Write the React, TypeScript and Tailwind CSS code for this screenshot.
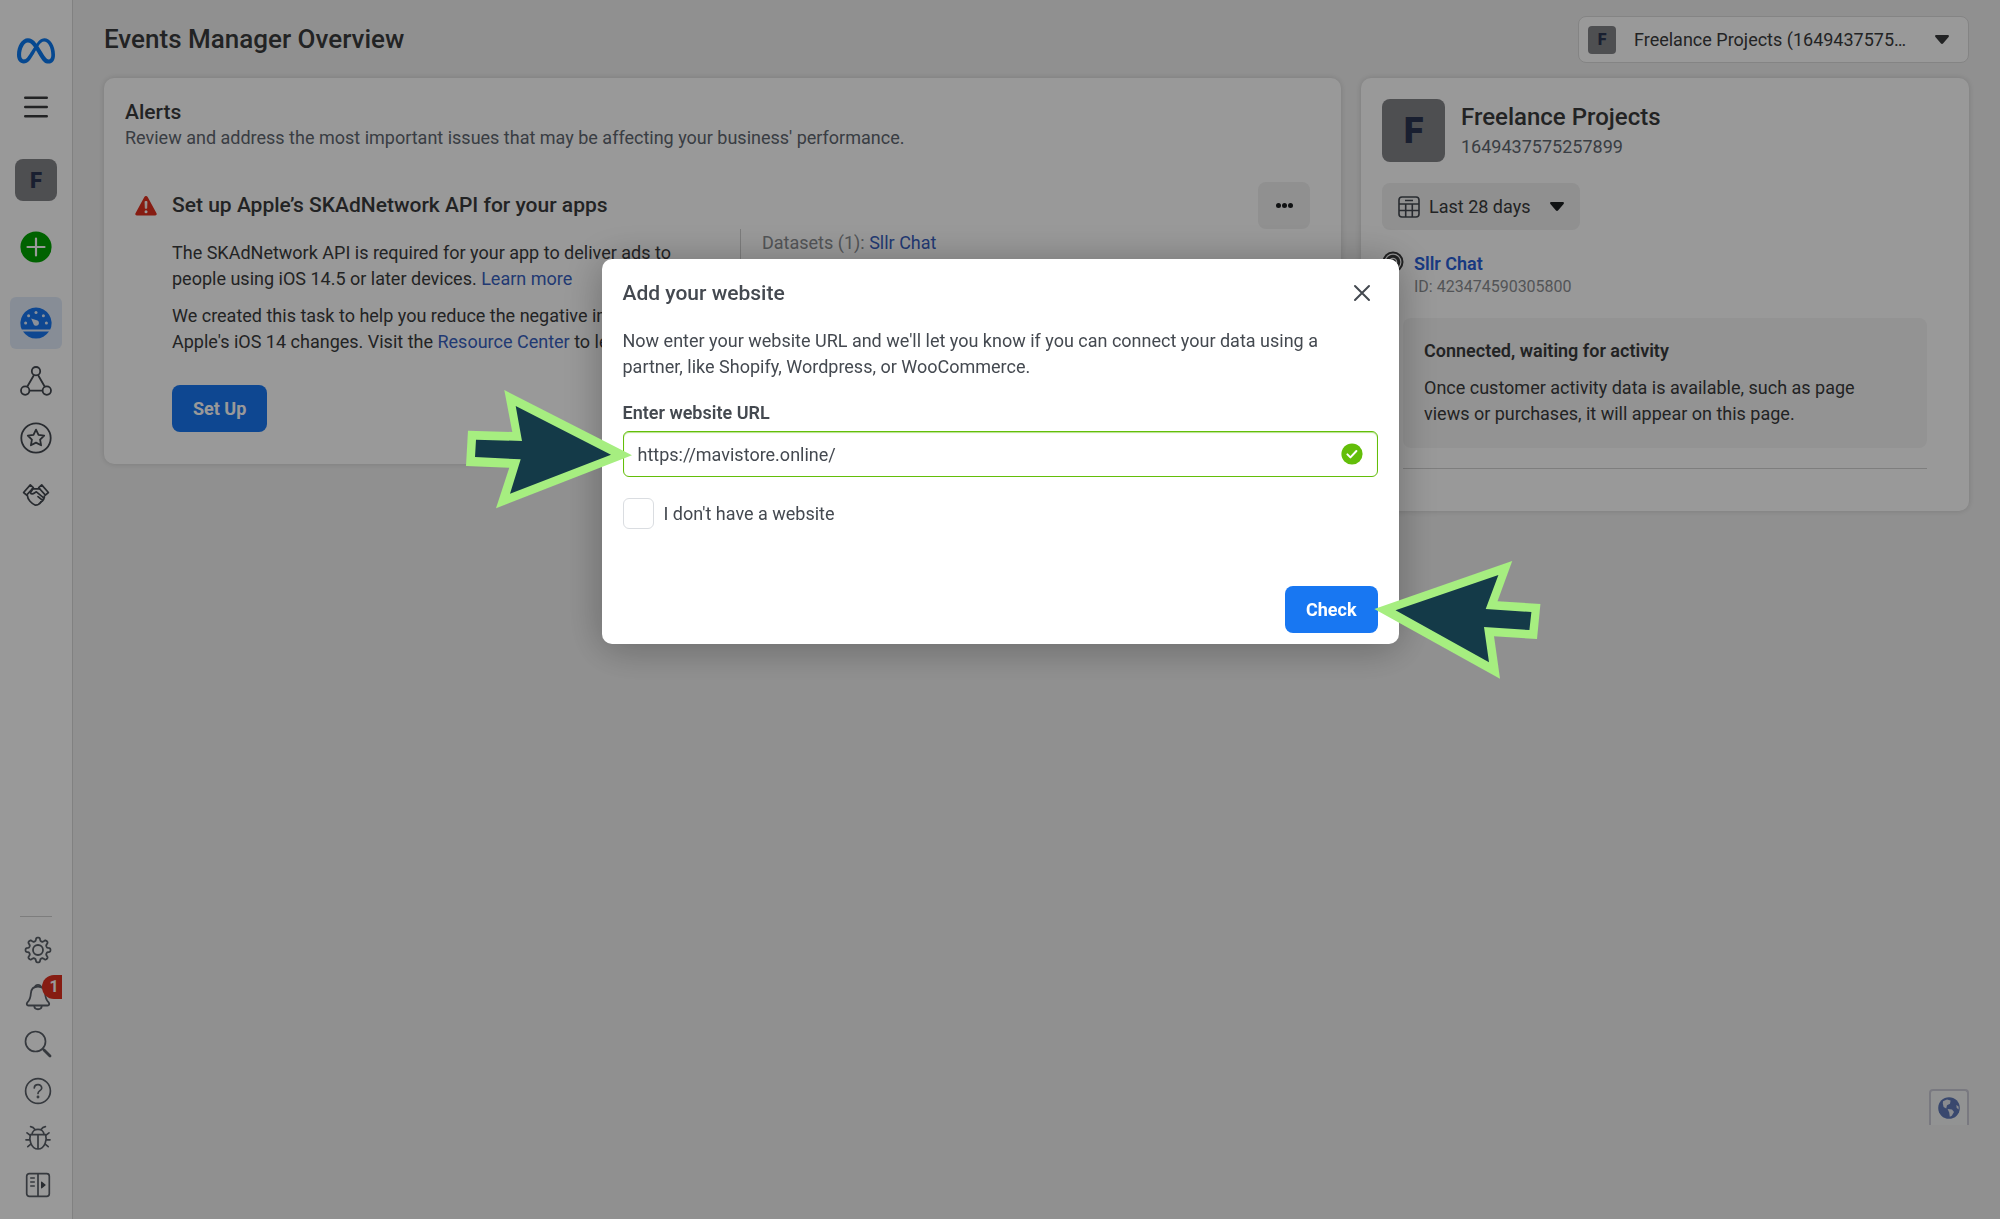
import type { ReactNode } from "react";
import { FaMeta } from "react-icons/fa6";

type IconProps = { className?: string };

// Eight rounded teeth around a 28x28 centre
const gearPoints = Array.from({ length: 120 }, (_, i) => {
  const angle = (i / 120) * Math.PI * 2;
  const radius = 10.8 + 1.7 * Math.tanh(2 * Math.cos(angle * 8));
  return `${(14 + radius * Math.sin(angle)).toFixed(2)},${(14 - radius * Math.cos(angle)).toFixed(2)}`;
}).join(" ");

const CaretDown = ({ className }: IconProps) => (
  <svg viewBox="0 0 14 9" fill="currentColor" className={className} aria-hidden="true">
    <path d="M1.2 0h11.6c1 0 1.5 1.1.8 1.9L8 8.5a1.4 1.4 0 0 1-2 0L.4 1.9C-.3 1.1.2 0 1.2 0z" />
  </svg>
);

const MenuIcon = () => (
  <svg viewBox="0 0 24 22" className="h-[22px] w-6" stroke="#3a3b3c" strokeWidth="2.4" strokeLinecap="round">
    <path d="M1.2 1.8h21.6M1.2 11h21.6M1.2 20.2h21.6" />
  </svg>
);

const PlusIcon = () => (
  <svg viewBox="0 0 32 32" className="size-8">
    <circle cx="16" cy="16" r="15.6" fill="#00a400" />
    <path d="M16 7.5v17M7.5 16h17" stroke="#fff" strokeWidth="2.2" strokeLinecap="round" />
  </svg>
);

const GaugeIcon = () => (
  <svg viewBox="0 0 32 32" className="size-8">
    <path d="M1.8 22.6A15.6 15.6 0 1 1 30.2 22.6z" fill="#1877f2" />
    <path d="M3 24.6h26A15.6 15.6 0 0 1 3 24.6z" fill="#1877f2" />
    <g fill="#e7f1ff">
      <circle cx="5.6" cy="16" r="1.5" />
      <circle cx="8.6" cy="8.8" r="1.5" />
      <circle cx="16" cy="5.6" r="1.5" />
      <circle cx="23.4" cy="8.8" r="1.5" />
      <circle cx="26.4" cy="16" r="1.5" />
      <path d="M11.2 11.6l6.3 2a2.8 2.800 0 1 1-3.800 3.800z" />
    </g>
  </svg>
);

const TriangleNodesIcon = () => (
  <svg viewBox="0 0 32 30" className="h-[30px] w-8" fill="none" stroke="#444950" strokeWidth="1.8">
    <circle cx="16" cy="5.2" r="4.2" />
    <circle cx="5.2" cy="24.6" r="4.2" />
    <circle cx="26.8" cy="24.6" r="4.2" />
    <path d="M14 9L7.2 20.8M18 9l6.8 11.8M9.4 24.6h13.2" />
  </svg>
);

const StarIcon = () => (
  <svg viewBox="0 0 32 32" className="size-8" fill="none" stroke="#444950" strokeWidth="1.8" strokeLinejoin="round">
    <circle cx="16" cy="16" r="14.7" />
    <path d="M16 7.6l2.5 5.2 5.7.8-4.1 4 1 5.7-5.1-2.7-5.1 2.7 1-5.7-4.1-4 5.7-.8z" />
  </svg>
);

const HandshakeIcon = () => (
  <svg
    viewBox="0 0 28 24"
    className="h-6 w-7"
    fill="none"
    stroke="#444950"
    strokeWidth="1.7"
    strokeLinejoin="round"
    strokeLinecap="round"
  >
    <path d="M8.3 1.9l3 2.8-6.7 7.4-3-2.6z" />
    <path d="M19.7 1.9l-3 2.8 6.7 7.4 3-2.6z" />
    <path d="M10.4 5.8h7.2M5.4 12.6c.2 4 4 7.9 8 9.6 2.6 0 4.6-1.6 5.8-3.4" />
    <path d="M10.8 6L8.4 9.8c.8 1.6 2.8 1.2 4 .2l2-1.2 7 5.8c1 1.2-.6 2.8-2 1.8L16 13.6M22.400 13c.4 1.800-1.200 5.200-3.600 6" />
  </svg>
);

const GearIcon = () => (
  <svg viewBox="0 0 28 28" className="size-7" fill="none" stroke="#5a6068" strokeWidth="1.8" strokeLinejoin="round">
    <circle cx="14" cy="14" r="5" />
    <polygon points={gearPoints} />
  </svg>
);

const BellIcon = () => (
  <svg viewBox="0 0 28 28" className="size-7" fill="none" stroke="#5a6068" strokeWidth="1.8" strokeLinejoin="round">
    <path d="M14 3.5c5 0 7 3.6 7.2 7.2.2 4.6 1.2 6.4 3.4 8.6 1.2 1.4.6 3.2-1 3.2H4.4c-1.6 0-2.2-1.8-1-3.2 2.2-2.2 3.2-4 3.4-8.6C7 7.1 9 3.5 14 3.5z" />
    <path d="M11.2 3.8c.4-2.6 5.2-2.6 5.6 0M10.2 22.5c.2 5 7.4 5 7.6 0" />
  </svg>
);

const SearchIcon = () => (
  <svg viewBox="0 0 28 28" className="size-7" fill="none" stroke="#5a6068" strokeLinecap="round">
    <circle cx="11.5" cy="11.5" r="10" strokeWidth="1.7" />
    <path d="M18.8 18.8l1.6 1.6" strokeWidth="1.8" />
    <path d="M20 20l6 6" strokeWidth="2.8" />
  </svg>
);

const HelpIcon = () => (
  <svg viewBox="0 0 28 28" className="size-7" fill="none" stroke="#5a6068" strokeWidth="1.7" strokeLinecap="round">
    <circle cx="14" cy="14" r="12.4" />
    <path d="M10.3 11c.2-4.6 7.6-4.4 7.4.2-.2 2.6-3.7 2.4-3.7 5.200" />
    <circle cx="14" cy="20" r=".6" fill="#5a6068" />
  </svg>
);

const BugIcon = () => (
  <svg
    viewBox="0 0 28 28"
    className="size-7"
    fill="none"
    stroke="#5a6068"
    strokeWidth="1.7"
    strokeLinecap="round"
    strokeLinejoin="round"
  >
    <path d="M6.4 10.6h15.2c.8 2.6.6 6-.4 8.6-1.4 3.6-4 5.8-7.2 5.8s-5.8-2.2-7.2-5.8c-1-2.6-1.2-6-.4-8.6zM14 10.6V25" />
    <path d="M8 10.400C8.400 3.600 19.600 3.600 20 10.400M10.600 5.200C9.800 3.600 8.400 2.800 6.600 2.600M17.400 5.200c.8-1.600 2.200-2.400 4-2.600" />
    <path d="M6 11.2L3 8.8M5.4 15.8H2M6.8 20.2l-3 2.4M22 11.2l3-2.4M22.6 15.8H26M21.2 20.2l3 2.4" />
  </svg>
);

const PanelIcon = () => (
  <svg viewBox="0 0 28 28" className="size-7" fill="none" stroke="#5a6068" strokeWidth="1.7">
    <rect x="2.7" y="2.7" width="22.6" height="22.6" rx="2.6" />
    <path d="M14 2.7v22.6M6.2 7h4.6M6.2 11h4.6M6.2 15h4.6" />
    <path d="M17 11.2v5.6c0 .6.6.8 1 .4l3.4-2.6c.4-.3.4-.9 0-1.2L18 10.8c-.4-.4-1-.2-1 .4z" fill="#444950" stroke="none" />
  </svg>
);

const WarningIcon = () => (
  <svg viewBox="0 0 22 20" className="h-5 w-[22px]">
    <path
      d="M9.2 1.2c.8-1.5 2.8-1.5 3.6 0l8.7 16c.6 1.1 0 2.3-1.3 2.3H1.8C.5 19.5-.1 18.3.5 17.2z"
      fill="#e0301e"
    />
    <path d="M10 5.500h2l-.3 6.800h-1.400z" fill="#fff" stroke="#fff" strokeWidth=".8" />
    <circle cx="11" cy="15.8" r="1.5" fill="#fff" />
  </svg>
);

const CalendarIcon = () => (
  <svg viewBox="0 0 22 22" className="size-[22px]" fill="none" stroke="#444950" strokeWidth="1.6">
    <rect x="1" y="1" width="20" height="20" rx="3" />
    <path d="M1 8h20M1 14.5h20M7.700 8v13M14.300 8v13M7 4.500h8" />
  </svg>
);

const DatasetIcon = () => (
  <svg viewBox="0 0 22 22" className="size-[22px]" fill="none" stroke="#3a3b3c" strokeWidth="2">
    <circle cx="11" cy="11" r="9.5" />
    <circle cx="11" cy="11" r="5.8" strokeWidth="3" />
    <circle cx="11" cy="11" r="2" fill="#3a3b3c" />
  </svg>
);

const CloseIcon = () => (
  <svg viewBox="0 0 18 18" className="size-[18px]" stroke="#444950" strokeWidth="2" strokeLinecap="round">
    <path d="M2 2l14 14M16 2L2 16" />
  </svg>
);

const ValidIcon = () => (
  <svg viewBox="0 0 22 22" className="pointer-events-none absolute right-[15px] size-[22px]">
    <circle cx="11" cy="11" r="10.6" fill="#63be09" />
    <path
      d="M6.4 11.4l3 3 6-6.4"
      fill="none"
      stroke="#fff"
      strokeWidth="2"
      strokeLinecap="round"
      strokeLinejoin="round"
    />
  </svg>
);

const GlobeIcon = () => (
  <svg viewBox="0 0 22 22" className="size-[22px]">
    <circle cx="11" cy="11" r="10.8" fill="#5f79b8" />
    <g fill="#e4e8ee">
      <path d="M5 4.200L9 2.400l3.600 1-.6 3.400-3 1.400-.8 3.200-2.600-1.400-.8-3.600z" />
      <path d="M9.600 12l4.400.6 2 2.400-2.200 3.800-2 1-.6-4.200z" />
      <path d="M18.400 8l2.200 1.400v3l-2-1.600z" />
    </g>
  </svg>
);

function NavItem({ label, active, children }: { label: string; active?: boolean; children: ReactNode }) {
  return (
    <a
      href="#"
      aria-label={label}
      className={`flex w-[52px] items-center justify-center rounded-md ${active ? "h-[52px] bg-[#e2ecfb]" : "h-9"}`}
    >
      {children}
    </a>
  );
}

function Sidebar() {
  return (
    <nav className="flex w-[73px] shrink-0 flex-col items-center justify-between border-r border-[#d8d8d8] bg-white pt-[33px] pb-4">
      <div className="flex flex-col items-center">
        <NavItem label="Meta">
          <FaMeta className="size-[38px] text-[#0a78f0]" />
        </NavItem>
        <button type="button" aria-label="All tools" className="mt-5 flex h-9 items-center">
          <MenuIcon />
        </button>
        <div className="mt-[34px] flex size-[42px] items-center justify-center rounded-lg bg-[#838488] text-[22px] font-black text-[#2b3450]">
          F
        </div>
        <div className="mt-7">
          <NavItem label="Create">
            <PlusIcon />
          </NavItem>
        </div>
        <div className="mt-8">
          <NavItem label="Overview" active>
            <GaugeIcon />
          </NavItem>
        </div>
        <div className="mt-[14px] flex flex-col gap-[21px]">
          <NavItem label="Data sources">
            <TriangleNodesIcon />
          </NavItem>
          <NavItem label="Custom conversions">
            <StarIcon />
          </NavItem>
          <NavItem label="Partner integrations">
            <HandshakeIcon />
          </NavItem>
        </div>
      </div>
      <div className="flex flex-col items-center gap-[11px] pl-1">
        <hr className="mr-1 mb-1 w-8 border-[#d0d0d0]" />
        <NavItem label="Settings">
          <GearIcon />
        </NavItem>
        <div className="relative">
          <NavItem label="Notifications">
            <BellIcon />
          </NavItem>
          <span className="absolute -top-1 right-0.5 flex h-6 w-5 items-center justify-center rounded-l-full bg-[#e0301e] pl-1 text-base font-bold text-white">
            1
          </span>
        </div>
        <NavItem label="Search">
          <SearchIcon />
        </NavItem>
        <NavItem label="Help">
          <HelpIcon />
        </NavItem>
        <NavItem label="Report a problem">
          <BugIcon />
        </NavItem>
        <NavItem label="Expand panel">
          <PanelIcon />
        </NavItem>
      </div>
    </nav>
  );
}

function AlertsCard() {
  return (
    <section className="min-w-0 flex-1 rounded-[10px] bg-white px-[21px] pt-[21px] pb-8 shadow-[0_0_6px_rgba(0,0,0,0.15)]">
      <h2 className="text-[21px] leading-[26px] font-medium text-[#3a3b3c]">Alerts</h2>
      <p className="text-lg leading-[26px] text-[#606770]">
        Review and address the most important issues that may be affecting your business' performance.
      </p>
      <div className="mt-[31px] flex items-center pr-[10px] pl-[10px]">
        <WarningIcon />
        <h3 className="ml-[15px] flex-1 text-[21px] font-medium text-[#3a3b3c]">
          Set up Apple’s SKAdNetwork API for your apps
        </h3>
        <button
          type="button"
          aria-label="More options"
          className="flex h-[47px] w-[52px] items-center justify-center gap-px rounded-lg bg-[#f0f0f0]"
        >
          <span className="size-[5px] rounded-full bg-[#1c1e21]" />
          <span className="size-[5px] rounded-full bg-[#1c1e21]" />
          <span className="size-[5px] rounded-full bg-[#1c1e21]" />
        </button>
      </div>
      <div className="flex pl-[47px]">
        <div className="w-[568px] shrink-0 pt-[11px] text-lg leading-[26px] text-[#3a3b3c]">
          <p className="w-[520px]">
            The SKAdNetwork API is required for your app to deliver ads to people using iOS 14.5 or later devices.{" "}
            <a href="#" className="text-[#385fc0]">Learn more</a>
          </p>
          <p className="mt-[11px]">
            We created this task to help you reduce the negative impact of
            <br />
            Apple's iOS 14 changes. Visit the <a href="#" className="text-[#385fc0]">Resource Center</a> to learn more.
          </p>
          <button type="button" className="mt-[30px] h-[47px] rounded-lg bg-[#1877f2] px-[21px] font-bold text-white">
            Set Up
          </button>
        </div>
        <div className="mb-14 border-l border-[#cfcfcf] pl-[21px] text-lg leading-7 text-[#8a8d91]">
          Datasets (1): <a href="#" className="text-[#385fc0]">Sllr Chat</a>
        </div>
      </div>
    </section>
  );
}

function AccountCard() {
  return (
    <aside className="w-[608px] shrink-0 rounded-[10px] bg-white px-[21px] pt-[21px] pb-[42px] shadow-[0_0_6px_rgba(0,0,0,0.15)]">
      <div className="flex gap-4">
        <div className="flex size-[63px] items-center justify-center rounded-lg bg-[#838488] text-[36px] font-black text-[#2b3450]">
          F
        </div>
        <div className="pt-1">
          <h2 className="text-2xl leading-7 font-medium text-[#3a3b3c]">Freelance Projects</h2>
          <p className="text-lg leading-8 text-[#606770]">1649437575257899</p>
        </div>
      </div>
      <button
        type="button"
        className="mt-5 flex h-[47px] items-center rounded-lg bg-[#f0f0f0] px-4 text-lg text-[#3a3b3c]"
      >
        <CalendarIcon />
        <span className="mr-5 ml-[9px]">Last 28 days</span>
        <CaretDown className="h-[9px] w-[14px] text-[#1c1e21]" />
      </button>
      <div className="mt-[21px] flex gap-[10px]">
        <DatasetIcon />
        <div>
          <a href="#" className="block text-lg leading-[26px] font-semibold text-[#2860d8]">Sllr Chat</a>
          <p className="text-base leading-5 text-[#8a8d91]">ID: 423474590305800</p>
        </div>
      </div>
      <div className="mr-[21px] ml-[21px] border-b border-[#d2d2d2] pb-5">
        <div className="mt-[21px] rounded-lg bg-[#f5f5f5] pt-5 pr-14 pb-[21px] pl-[21px] text-lg leading-[26px] text-[#3a3b3c]">
          <h3 className="font-semibold">Connected, waiting for activity</h3>
          <p className="mt-[11px]">
            Once customer activity data is available, such as page views or purchases, it will appear on this page.
          </p>
        </div>
      </div>
    </aside>
  );
}

function ArrowRight() {
  return (
    <svg viewBox="464 388 170 122" className="absolute top-[129px] left-[-138px] h-[122px] w-[170px]" aria-hidden="true">
      <path d="M632 455.3L504.3 390l8 42-44.3-1.3-2 35.3 43.3 1.7-13.3 40.6z" fill="#a6ee80" />
      <path d="M611 454.7L515.7 406l6.3 35-46-1.3-1 17.3 45.7 2.3-10.7 34.4z" fill="#143a48" />
    </svg>
  );
}

function ArrowLeft() {
  return (
    <svg viewBox="1372 559 170 122" className="absolute top-[300px] right-[-143px] h-[122px] w-[170px]" aria-hidden="true">
      <path d="M1374.3 609l137.9-48-14.7 40.3 42.9 2.7-3.4 35-43-2.7 6 42.4z" fill="#a6ee80" />
      <path d="M1395.5 610.3l102.9-35.3-12.7 34 45.7 3-2 18-45.4-3 5 35.3z" fill="#143a48" />
    </svg>
  );
}

function WebsiteDialog() {
  return (
    <div
      role="dialog"
      aria-labelledby="dialog-title"
      className="relative w-[797px] rounded-[10px] bg-white px-[21px] pt-[21px] pb-[11px] text-lg leading-[26px] text-[#444950] shadow-[0_4px_40px_rgba(0,0,0,0.3)]"
    >
      <div className="flex items-center justify-between pr-[7px]">
        <h2 id="dialog-title" className="text-[21px] leading-[26px] font-medium">Add your website</h2>
        <button type="button" aria-label="Close">
          <CloseIcon />
        </button>
      </div>
      <p className="mt-[22px]">
        Now enter your website URL and we'll let you know if you can connect your data using a partner, like Shopify,
        Wordpress, or WooCommerce.
      </p>
      <label htmlFor="website-url" className="mt-5 block font-semibold">Enter website URL</label>
      <div className="relative mt-[5px] flex items-center">
        <input
          id="website-url"
          type="text"
          defaultValue="https://mavistore.online/"
          className="h-[46px] w-full rounded-md border border-[#63be09] px-[14px] shadow-[inset_0_1px_1px_#b5e38a] outline-none"
        />
        <ValidIcon />
      </div>
      <label className="mt-[21px] flex items-center gap-[10px]">
        <input type="checkbox" className="size-[31px] appearance-none rounded-md border border-[#dadde1] bg-white" />
        I don't have a website
      </label>
      <div className="mt-[57px] flex justify-end">
        <button type="button" className="h-[47px] rounded-lg bg-[#1877f2] px-[21px] font-bold text-white">
          Check
        </button>
      </div>
      <ArrowRight />
      <ArrowLeft />
    </div>
  );
}

export default function App() {
  return (
    <div className="flex min-h-screen bg-[#f1f1f1] font-['Roboto',sans-serif]">
      <Sidebar />
      <main className="min-w-0 flex-1 px-[31px] pt-4">
        <header className="flex items-center justify-between">
          <h1 className="text-[26px] font-medium text-[#3a3b3c]">Events Manager Overview</h1>
          <div className="flex h-[47px] w-[391px] items-center rounded-lg border border-[#dcdcdc] bg-white pr-[19px] pl-[9px]">
            <span className="flex size-7 items-center justify-center rounded bg-[#838488] text-base font-black text-[#2b3450]">
              F
            </span>
            <select
              aria-label="Account"
              className="ml-[18px] min-w-0 flex-1 appearance-none bg-transparent text-lg text-[#3a3b3c] outline-none"
            >
              <option>Freelance Projects (1649437575…</option>
            </select>
            <CaretDown className="h-[9px] w-[14px] text-[#3a3b3c]" />
          </div>
        </header>
        <div className="mt-[15px] flex items-start gap-5">
          <AlertsCard />
          <AccountCard />
        </div>
      </main>
      <button
        type="button"
        aria-label="Language"
        className="fixed right-[31px] bottom-[94px] flex h-9 w-10 items-center justify-center rounded-t border-2 border-b-0 border-[#cacad6] bg-[#f4f6f6]"
      >
        <GlobeIcon />
      </button>
      <div className="fixed inset-0 flex items-start justify-center bg-black/40 pt-[259px]">
        <WebsiteDialog />
      </div>
    </div>
  );
}
